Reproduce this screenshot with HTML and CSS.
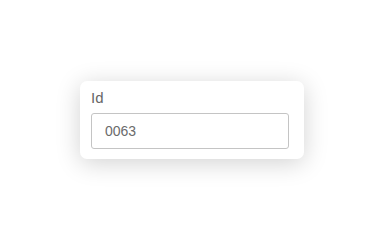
FILE: index.html
```html
<!DOCTYPE html>
<html>
<head>
<meta charset="utf-8">
<link rel="stylesheet" href="styles.css">
</head>
<body>
<div class="page">
  <div class="card">
    <label class="label" for="id">Id</label>
    <input class="field" id="id" type="text" value="0063">
  </div>
</div>
</body>
</html>
```
FILE: styles.css
```css
html, body {
  margin: 0;
  padding: 0;
  background: #ffffff;
}
.page {
  width: 384px;
  height: 239px;
  display: flex;
  align-items: center;
  justify-content: center;
}
.card {
  box-sizing: border-box;
  width: 224px;
  height: 78px;
  padding: 8px 15px 10px 11px;
  background: #ffffff;
  border-radius: 7px;
  box-shadow: 0 4px 24px rgba(0, 0, 0, 0.18);
  display: flex;
  flex-direction: column;
  font-family: "Liberation Sans", Arial, sans-serif;
}
.label {
  font-size: 15px;
  line-height: 18px;
  color: #666666;
  margin-bottom: 6px;
}
.field {
  box-sizing: border-box;
  width: 198px;
  height: 36px;
  margin: 0;
  padding: 0 13px;
  border: 1px solid #c4c4c4;
  border-radius: 3px;
  font-family: "Liberation Sans", Arial, sans-serif;
  font-size: 14px;
  color: #6b6b6b;
  background: #ffffff;
  outline: none;
}
```
